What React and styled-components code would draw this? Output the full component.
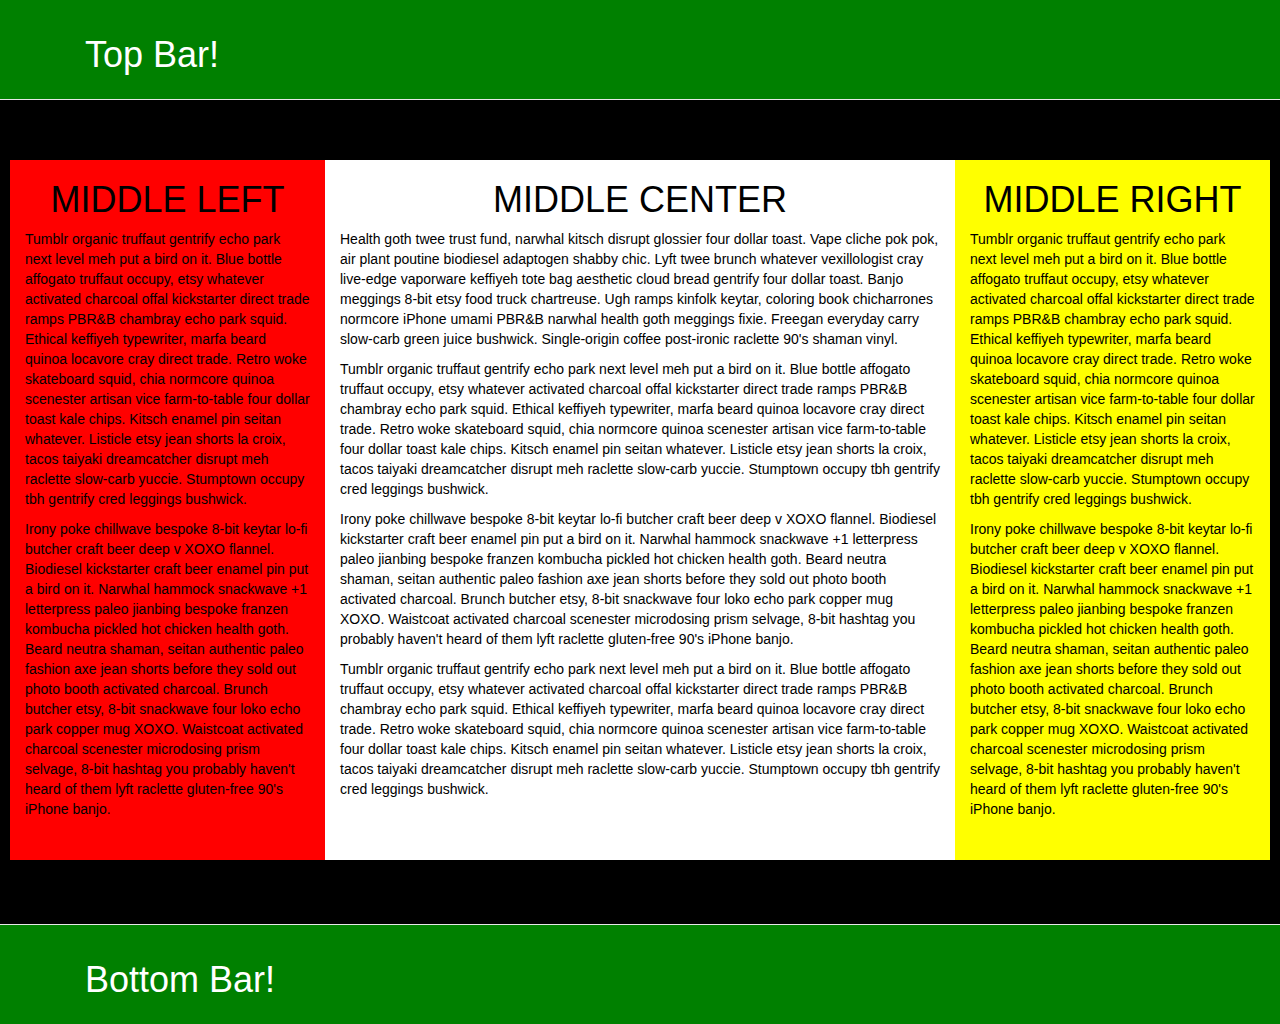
import React from "react";
import styled, { createGlobalStyle } from "styled-components";

const GlobalStyle = createGlobalStyle`
  *, *::before, *::after {
    box-sizing: border-box;
  }

  body {
    margin: 0;
    background: #000;
    color: #000;
    font-family: "Liberation Sans", Arial, sans-serif;
    font-size: 14px;
    line-height: 20px;
  }
`;

const Page = styled.div`
  display: flex;
  flex-direction: column;
  min-height: 100vh;
`;

const Heading = styled.h1`
  margin: 0;
  font-size: 36px;
  font-weight: 400;
  line-height: 40px;
`;

const TopBar = styled.header`
  padding: 35px 0 24px;
  background: #008000;
  border-bottom: 1px solid #e7e7e7;
  color: #fff;
`;

const BottomBar = styled.footer`
  padding: 35px 0 24px;
  background: #008000;
  border-top: 1px solid #e7e7e7;
  color: #fff;
`;

const BarContent = styled.div`
  max-width: 1170px;
  margin: 0 auto;
  padding: 0 30px;
`;

const Columns = styled.main`
  flex: 1;
  display: grid;
  grid-template-columns: 1fr 2fr 1fr;
  align-items: stretch;
  align-content: start;
  padding: 60px 10px;
`;

const Column = styled.section`
  min-width: 0;
  padding: 20px 15px 31px;
  background: ${({ $background }) => $background};
`;

const ColumnHeading = styled(Heading)`
  margin-bottom: 9px;
  text-align: center;
`;

const Paragraph = styled.p`
  margin: 0 0 10px;
`;

const HEALTH =
  "Health goth twee trust fund, narwhal kitsch disrupt glossier four dollar toast. Vape cliche pok pok, air plant poutine biodiesel adaptogen shabby chic. Lyft twee brunch whatever vexillologist cray live-edge vaporware keffiyeh tote bag aesthetic cloud bread gentrify four dollar toast. Banjo meggings 8-bit etsy food truck chartreuse. Ugh ramps kinfolk keytar, coloring book chicharrones normcore iPhone umami PBR&B narwhal health goth meggings fixie. Freegan everyday carry slow-carb green juice bushwick. Single-origin coffee post-ironic raclette 90's shaman vinyl.";

const TUMBLR =
  "Tumblr organic truffaut gentrify echo park next level meh put a bird on it. Blue bottle affogato truffaut occupy, etsy whatever activated charcoal offal kickstarter direct trade ramps PBR&B chambray echo park squid. Ethical keffiyeh typewriter, marfa beard quinoa locavore cray direct trade. Retro woke skateboard squid, chia normcore quinoa scenester artisan vice farm-to-table four dollar toast kale chips. Kitsch enamel pin seitan whatever. Listicle etsy jean shorts la croix, tacos taiyaki dreamcatcher disrupt meh raclette slow-carb yuccie. Stumptown occupy tbh gentrify cred leggings bushwick.";

const IRONY =
  "Irony poke chillwave bespoke 8-bit keytar lo-fi butcher craft beer deep v XOXO flannel. Biodiesel kickstarter craft beer enamel pin put a bird on it. Narwhal hammock snackwave +1 letterpress paleo jianbing bespoke franzen kombucha pickled hot chicken health goth. Beard neutra shaman, seitan authentic paleo fashion axe jean shorts before they sold out photo booth activated charcoal. Brunch butcher etsy, 8-bit snackwave four loko echo park copper mug XOXO. Waistcoat activated charcoal scenester microdosing prism selvage, 8-bit hashtag you probably haven't heard of them lyft raclette gluten-free 90's iPhone banjo.";

const COLUMNS = [
  { title: "MIDDLE LEFT", background: "#ff0000", paragraphs: [TUMBLR, IRONY] },
  {
    title: "MIDDLE CENTER",
    background: "#ffffff",
    paragraphs: [HEALTH, TUMBLR, IRONY, TUMBLR],
  },
  { title: "MIDDLE RIGHT", background: "#ffff00", paragraphs: [TUMBLR, IRONY] },
];

export default function App() {
  return (
    <>
      <GlobalStyle />
      <Page>
        <TopBar>
          <BarContent>
            <Heading>Top Bar!</Heading>
          </BarContent>
        </TopBar>
        <Columns>
          {COLUMNS.map(({ title, background, paragraphs }) => (
            <Column key={title} $background={background}>
              <ColumnHeading>{title}</ColumnHeading>
              {paragraphs.map((text, index) => (
                <Paragraph key={index}>{text}</Paragraph>
              ))}
            </Column>
          ))}
        </Columns>
        <BottomBar>
          <BarContent>
            <Heading>Bottom Bar!</Heading>
          </BarContent>
        </BottomBar>
      </Page>
    </>
  );
}
